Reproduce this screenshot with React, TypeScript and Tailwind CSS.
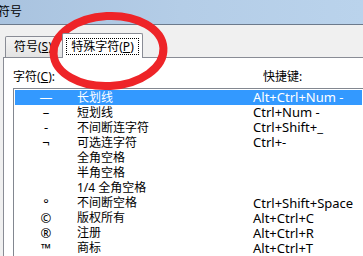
const cjk = "font-['Noto_Sans','Noto_Sans_CJK_SC',sans-serif]";

type Row = { sym: string; name: string; key: string };

const rows: Row[] = [
  { sym: "—", name: "长划线", key: "Alt+Ctrl+Num -" },
  { sym: "–", name: "短划线", key: "Ctrl+Num -" },
  { sym: "‑", name: "不间断连字符", key: "Ctrl+Shift+_" },
  { sym: "¬", name: "可选连字符", key: "Ctrl+-" },
  { sym: "", name: "全角空格", key: "" },
  { sym: "", name: "半角空格", key: "" },
  { sym: "", name: "1/4 全角空格", key: "" },
  { sym: "°", name: "不间断空格", key: "Ctrl+Shift+Space" },
  { sym: "©", name: "版权所有", key: "Alt+Ctrl+C" },
  { sym: "®", name: "注册", key: "Alt+Ctrl+R" },
  { sym: "™", name: "商标", key: "Alt+Ctrl+T" },
];

function CharRow({ row, selected }: { row: Row; selected: boolean }) {
  return (
    <div
      className={`flex h-[15.1px] items-center whitespace-nowrap ${
        selected ? "bg-[#3399ff] text-white" : "text-black"
      }`}
    >
      <span className="w-[62px] text-center text-[13px] leading-none">{row.sym}</span>
      <span className="w-[176px] text-[12px] leading-none">{row.name}</span>
      <span className="text-[13px] leading-none">{row.key}</span>
    </div>
  );
}

export default function App() {
  return (
    <div className={`relative h-[256px] w-[363px] overflow-hidden bg-[#f0f0f0] ${cjk}`}>
      {/* title bar */}
      <div className="flex h-[25px] items-center border-b border-[#6c7a8c] bg-gradient-to-r from-[#a9c3df] via-[#b4cde7] to-[#bad3ec]">
        <span className="ml-[-2px] text-[12px] leading-none text-black">符号</span>
      </div>

      {/* tabs */}
      <div className="flex h-[32px] items-end pl-[5px]">
        <div className="flex h-[21px] w-[58px] items-center rounded-t-[2px] border border-b-0 border-[#898c95] bg-gradient-to-b from-[#f4f4f4] to-[#e3e3e3] pl-[8px] text-[12px] text-black">
          符号(<span className="underline">S</span>)
        </div>
        <div className="relative z-10 -mb-px ml-[-1px] flex h-[25px] w-[81px] items-start justify-center rounded-t-[2px] border border-b-0 border-[#898c95] bg-white pt-[4px]">
          <div className="flex h-[17px] items-center border border-dotted border-black px-[4px] text-[12px] text-black">
            特殊字符(<span className="underline">P</span>)
          </div>
        </div>
      </div>

      {/* panel */}
      <div className="ml-[3px] h-[200px] border-l border-t border-[#898c95] bg-white">
        <div className="mt-[11px] flex h-[16px] items-center pl-[9px] text-[12px] text-black">
          <span className="w-[250px]">
            字符(<span className="underline">C</span>):
          </span>
          <span>快捷键:</span>
        </div>
        <div className="ml-[9px] mt-[3px] border-l border-t border-[#828790] p-px">
          {rows.map((r, i) => (
            <CharRow key={i} row={r} selected={i === 0} />
          ))}
        </div>
      </div>

      {/* red annotation ellipse */}
      <svg
        className="pointer-events-none absolute left-0 top-0"
        width="363"
        height="256"
        viewBox="0 0 363 256"
      >
        <ellipse
          cx="108.5"
          cy="51"
          rx="55"
          ry="35"
          fill="none"
          stroke="#ee2428"
          strokeWidth="8"
          transform="rotate(-3 108.5 51)"
        />
      </svg>
    </div>
  );
}
